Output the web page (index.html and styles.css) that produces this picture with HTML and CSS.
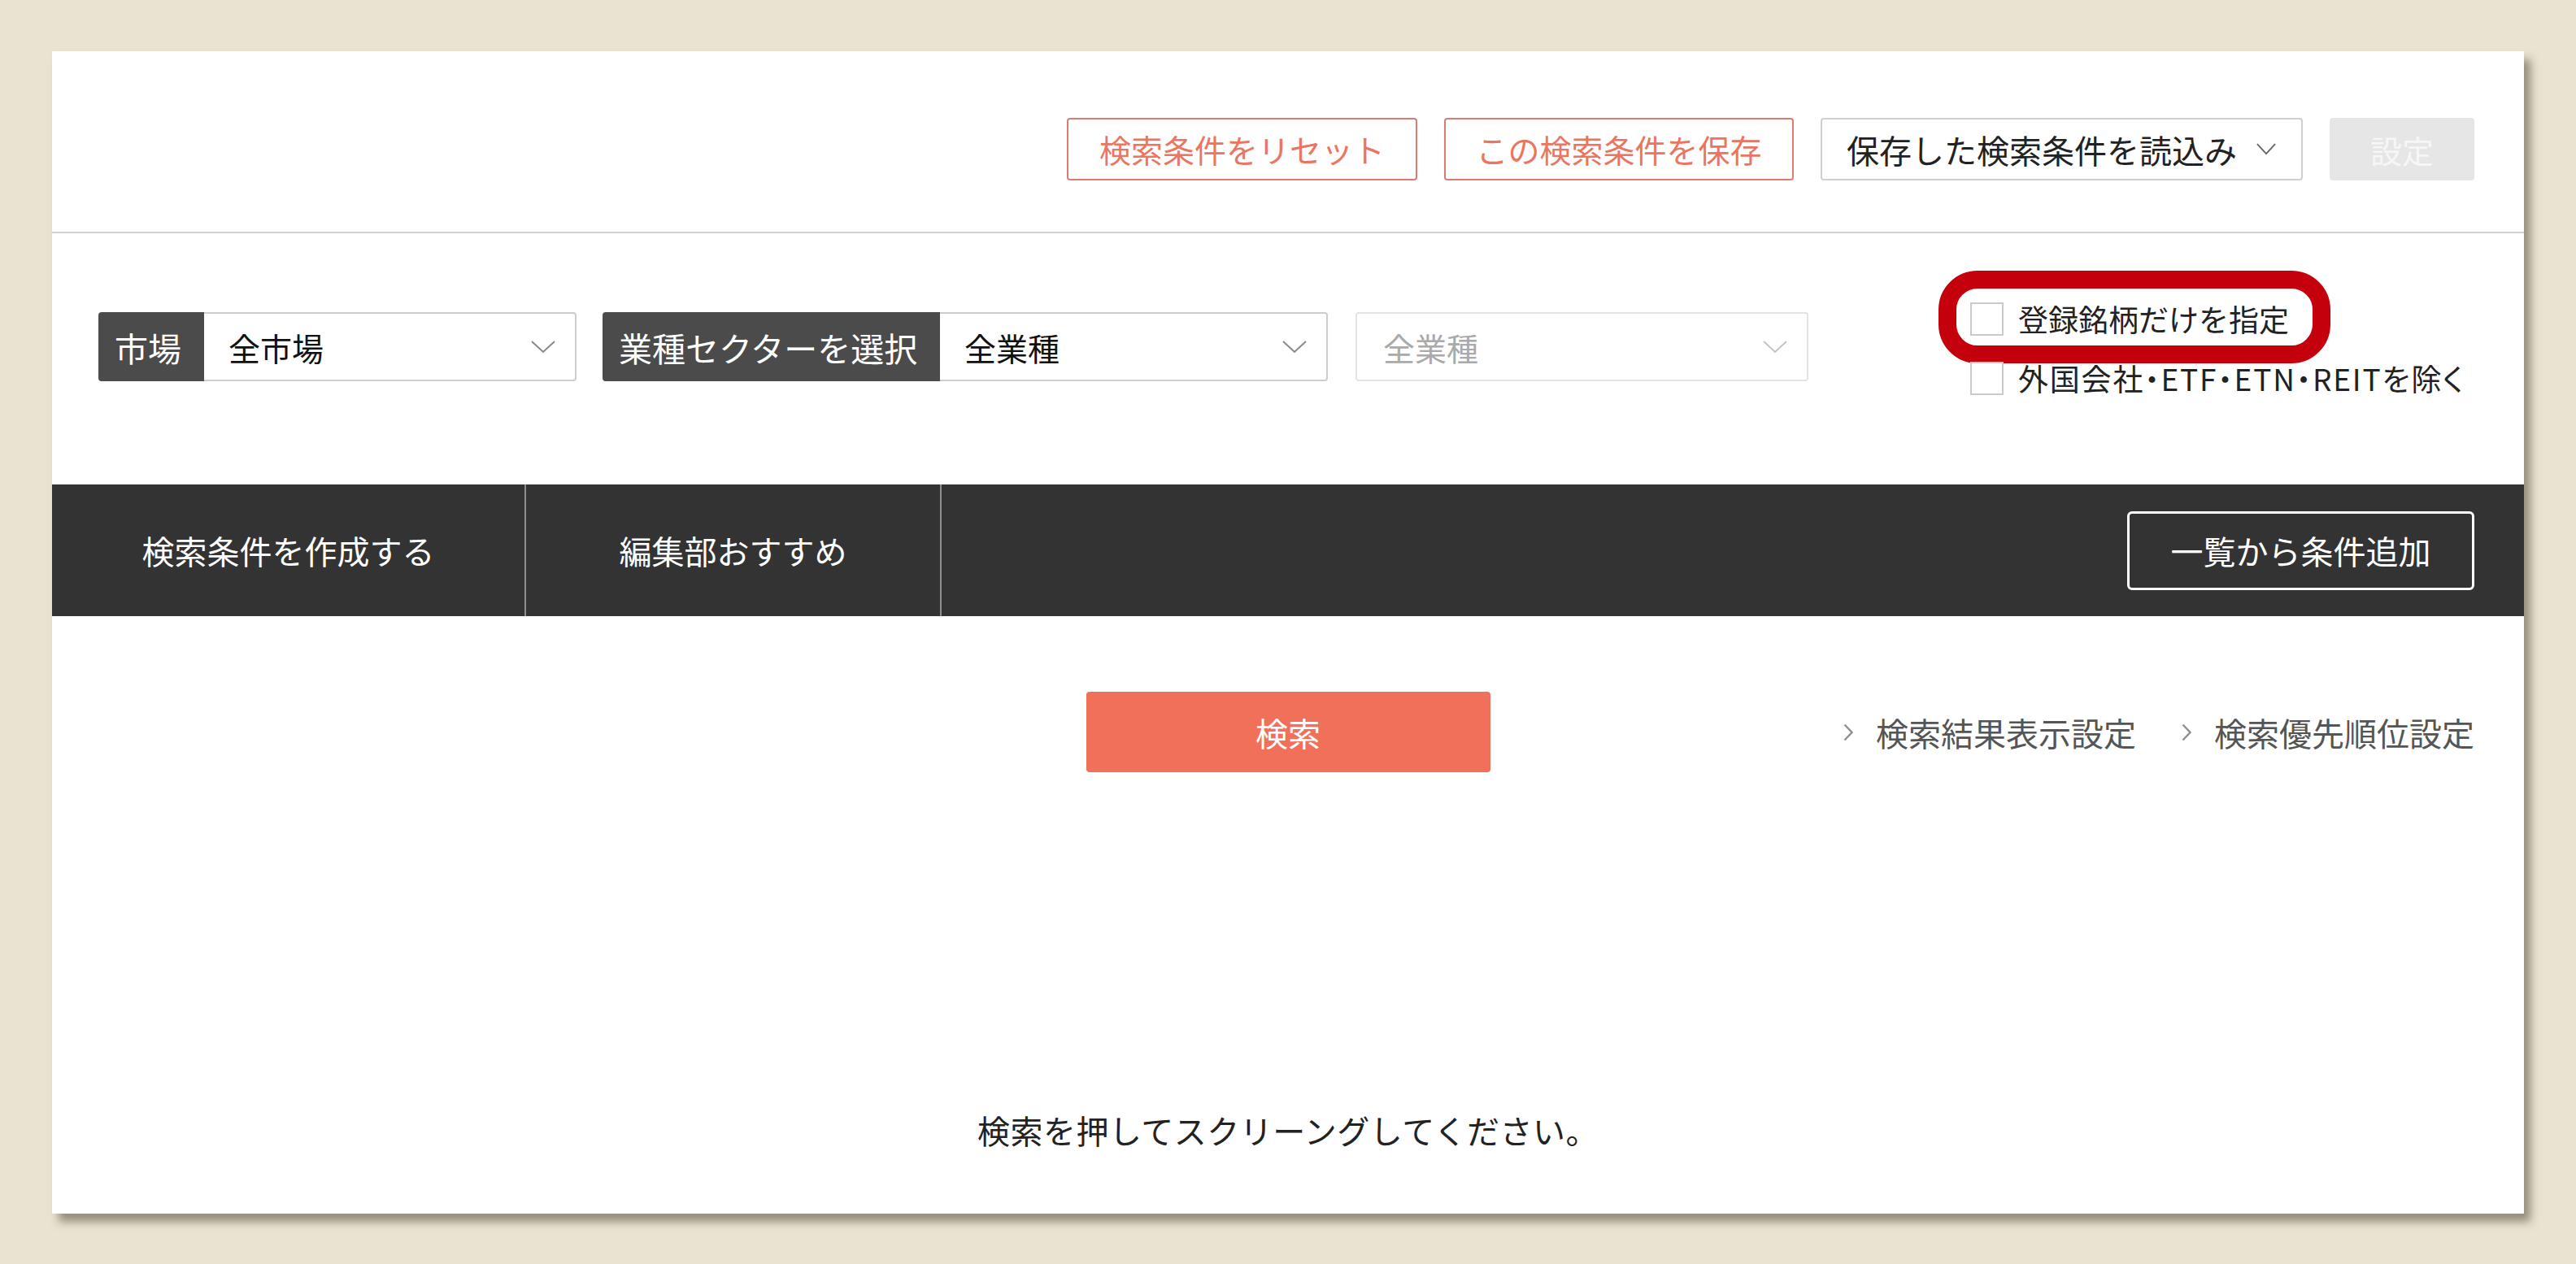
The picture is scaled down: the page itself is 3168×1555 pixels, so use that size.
FILE: index.html
```html
<!DOCTYPE html>
<html lang="ja">
<head>
<meta charset="utf-8">
<title>スクリーニング</title>
<link rel="stylesheet" href="styles.css">
</head>
<body>
<div class="panel">
  <header class="toolbar">
    <button class="btn-outline btn-reset">検索条件をリセット</button>
    <button class="btn-outline btn-save">この検索条件を保存</button>
    <div class="saved-select">保存した検索条件を読込み<svg class="chev chev-saved" viewBox="0 0 26 16"><polyline points="1,1 13,14 25,1"/></svg></div>
    <button class="btn-disabled">設定</button>
  </header>

  <section class="filters">
    <div class="field field-market">
      <span class="field-label label-market">市場</span>
      <div class="select select-market"><span>全市場</span><svg class="chev" viewBox="0 0 30 16"><polyline points="1,1 15,14 29,1"/></svg></div>
    </div>
    <div class="field field-sector">
      <span class="field-label label-sector">業種セクターを選択</span>
      <div class="select select-sector"><span>全業種</span><svg class="chev" viewBox="0 0 30 16"><polyline points="1,1 15,14 29,1"/></svg></div>
    </div>
    <div class="select select-disabled"><span>全業種</span><svg class="chev chev-light" viewBox="0 0 30 16"><polyline points="1,1 15,14 29,1"/></svg></div>
    <div class="checks">
      <label class="check check-marked"><span class="box"></span>登録銘柄だけを指定<span class="annotation"></span></label>
      <label class="check"><span class="box"></span><span class="check-text">外国会社・ETF・ETN・REITを除く</span></label>
    </div>
  </section>

  <nav class="tabbar">
    <div class="tab tab-create">検索条件を作成する</div>
    <div class="tab tab-editor">編集部おすすめ</div>
    <div class="tabbar-spacer"></div>
    <button class="btn-add">一覧から条件追加</button>
  </nav>

  <section class="search-row">
    <div class="search-spacer"></div>
    <button class="btn-search">検索</button>
    <div class="links">
      <a class="link"><svg class="link-chev" viewBox="0 0 12 22"><polyline points="1.5,1.5 10.5,11 1.5,20.5"/></svg>検索結果表示設定</a>
      <a class="link"><svg class="link-chev" viewBox="0 0 12 22"><polyline points="1.5,1.5 10.5,11 1.5,20.5"/></svg>検索優先順位設定</a>
    </div>
  </section>

  <p class="message">検索を押してスクリーングしてください。</p>
</div>
</body>
</html>
```

FILE: styles.css
```css
* {
  box-sizing: border-box;
}

html, body {
  margin: 0;
  padding: 0;
}

body {
  background: #e9e3d2;
  font-family: "Noto Sans CJK JP", "Noto Sans", sans-serif;
  color: #222;
  width: 3168px;
  height: 1555px;
  overflow: hidden;
}

.panel {
  margin: 63px 0 0 64px;
  width: 3040px;
  height: 1430px;
  background: #fff;
  display: flex;
  flex-direction: column;
  box-shadow: 8px 10px 10px rgba(70, 60, 40, 0.5);
}

button {
  font-family: inherit;
  cursor: pointer;
}

/* ---------- toolbar ---------- */
.toolbar {
  display: flex;
  justify-content: flex-end;
  align-items: center;
  gap: 33px;
  height: 224px;
  flex: none;
  padding: 82px 61px 63px;
  border-bottom: 2px solid #d2d2d2;
}

.btn-outline {
  height: 77px;
  background: #fff;
  border: 2px solid #dc7b6e;
  border-radius: 4px;
  color: #ea7560;
  font-size: 39px;
  padding: 0;
  line-height: 1;
  flex: none;
}

.btn-reset { width: 431px; }
.btn-save { width: 430px; }

.saved-select {
  width: 593px;
  height: 77px;
  border: 2px solid #cfcfcf;
  border-radius: 4px;
  display: flex;
  align-items: center;
  padding-left: 30px;
  font-size: 40px;
  color: #222;
  gap: 24px;
  flex: none;
}

.chev {
  width: 30px;
  height: 16px;
  fill: none;
  stroke: #888;
  stroke-width: 2;
  flex: none;
}

.chev-saved {
  width: 24px;
  height: 15px;
  stroke: #666;
}

.chev-light {
  stroke: #c4c4c4;
}

.btn-disabled {
  width: 178px;
  height: 77px;
  background: #e6e6e6;
  border: none;
  border-radius: 4px;
  color: #f6f6f6;
  font-size: 39px;
  padding: 0;
  flex: none;
}

/* ---------- filters ---------- */
.filters {
  display: flex;
  align-items: flex-start;
  height: 309px;
  flex: none;
  padding: 97px 0 0 57px;
}

.field {
  display: flex;
  height: 85px;
  flex: none;
}

.field-sector {
  margin-left: 32px;
}

.field-label {
  background: #4b4b4b;
  color: #fff;
  font-size: 41px;
  display: flex;
  align-items: center;
  padding-left: 20px;
  border-radius: 4px 0 0 4px;
}

.label-market { width: 130px; }
.label-sector { width: 415px; padding-left: 20px; }

.select {
  height: 85px;
  border: 2px solid #cdcdcd;
  border-left: none;
  border-radius: 0 4px 4px 0;
  display: flex;
  align-items: center;
  justify-content: space-between;
  padding: 0 24px 0 30px;
  font-size: 39px;
  color: #111;
  flex: none;
}

.select-market { width: 458px; }
.select-sector { width: 477px; }

.select-disabled {
  width: 557px;
  margin-left: 34px;
  border: 2px solid #e4e4e4;
  border-radius: 4px;
  color: #aaa;
  padding-left: 32px;
}

.checks {
  margin-left: 199px;
  margin-top: -15px;
  display: flex;
  flex-direction: column;
  gap: 27px;
  flex: none;
}

.check {
  position: relative;
  height: 46px;
  display: flex;
  align-items: center;
  font-size: 37px;
  color: #222;
  white-space: nowrap;
}

.check-text {
  font-feature-settings: "palt";
  letter-spacing: 1.8px;
}

.box {
  width: 41px;
  height: 41px;
  border: 2px solid #cacaca;
  background: #fff;
  margin-right: 18px;
  flex: none;
}

.annotation {
  position: absolute;
  left: -39px;
  top: -36px;
  width: 482px;
  height: 114px;
  border: 22px solid #c4000c;
  border-radius: 48px;
  pointer-events: none;
}

/* ---------- tab bar ---------- */
.tabbar {
  height: 162px;
  flex: none;
  background: #333;
  display: flex;
  align-items: stretch;
}

.tab {
  display: flex;
  align-items: center;
  justify-content: center;
  color: #fff;
  font-size: 40px;
  border-right: 2px solid #8e8e8e;
}

.tab-create { width: 583px; }
.tab-editor { width: 511px; }

.tabbar-spacer {
  flex: 1;
}

.btn-add {
  align-self: center;
  width: 427px;
  height: 97px;
  margin-right: 61px;
  background: transparent;
  border: 3px solid #fff;
  border-radius: 6px;
  color: #fff;
  font-size: 40px;
  padding: 0;
}

/* ---------- search row ---------- */
.search-row {
  display: grid;
  grid-template-columns: 1fr 497px 1fr;
  align-items: center;
  padding: 93px 61px 0;
  flex: none;
}

.btn-search {
  height: 99px;
  background: #f0705a;
  border: none;
  border-radius: 4px;
  color: #fff;
  font-size: 40px;
  padding: 0;
}

.links {
  justify-self: end;
  display: flex;
  gap: 56px;
}

.link {
  display: flex;
  align-items: center;
  color: #555;
  font-size: 40px;
  text-decoration: none;
}

.link-chev {
  width: 12px;
  height: 22px;
  fill: none;
  stroke: #8f8f8f;
  stroke-width: 2.4;
  margin-right: 28px;
}

/* ---------- message ---------- */
.message {
  margin: 415px 0 0;
  text-align: center;
  font-size: 40px;
  letter-spacing: 0.5px;
  line-height: 50px;
  color: #222;
}
```
